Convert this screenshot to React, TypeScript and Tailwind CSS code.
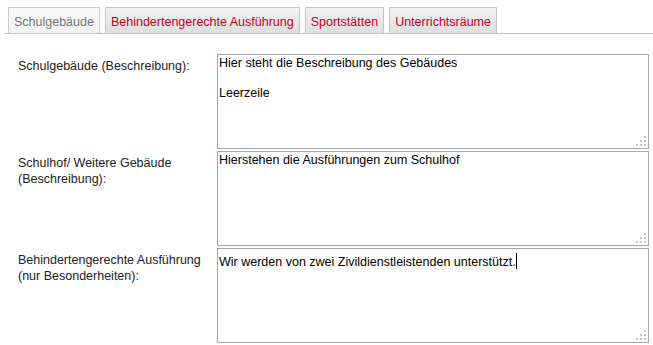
const tabs = [
  { label: "Schulgebäude", active: true },
  { label: "Behindertengerechte Ausführung" },
  { label: "Sportstätten" },
  { label: "Unterrichtsräume" },
];

function Grip() {
  return (
    <svg className="absolute bottom-[1px] right-[1px]" width="12" height="12" viewBox="0 0 12 12">
      <g fill="#c4c4c4">
        <rect x="9" y="1" width="2" height="2" />
        <rect x="5" y="5" width="2" height="2" />
        <rect x="9" y="5" width="2" height="2" />
        <rect x="1" y="9" width="2" height="2" />
        <rect x="5" y="9" width="2" height="2" />
        <rect x="9" y="9" width="2" height="2" />
      </g>
    </svg>
  );
}

function Field({ label, children }: { label: React.ReactNode; children: React.ReactNode }) {
  return (
    <div className="flex">
      <div className="w-[213px] shrink-0 pl-[14px] pt-[4px] leading-[16px] text-[#222]">{label}</div>
      <div className="relative h-[95px] w-[432px] shrink-0 border border-[#a5a9ad] bg-white px-[1px] pt-[1px] leading-[15px] text-black whitespace-pre-wrap">
        {children}
        <Grip />
      </div>
    </div>
  );
}

export default function App() {
  return (
    <div className="h-[345px] w-[653px] overflow-hidden bg-white pl-1 pt-[7px] text-[12.5px] font-['Liberation_Sans',Arial,sans-serif]">
      <div className="flex h-[27px] gap-[5px] border-b border-[#c9c9c9] pl-1">
        {tabs.map((t) => (
          <div
            key={t.label}
            className={
              t.active
                ? "h-[26px] border border-b-0 border-[#cdcdcd] bg-gradient-to-b from-[#f8f8f8] to-[#f3f3f3] px-[5px] pt-[5px] text-[#777]"
                : "h-[26px] border border-b-0 border-[#c6c6c6] bg-gradient-to-b from-[#f2f2f2] to-[#dedede] px-[5px] pt-[5px] text-[#c8001e]"
            }
          >
            {t.label}
          </div>
        ))}
      </div>
      <div className="mt-[20px] flex flex-col gap-[2px]">
        <Field label="Schulgebäude (Beschreibung):">
          {"Hier steht die Beschreibung des Gebäudes\n\nLeerzeile"}
        </Field>
        <Field
          label={
            <>
              Schulhof/ Weitere Gebäude
              <br />
              (Beschreibung):
            </>
          }
        >
          Hierstehen die Ausführungen zum Schulhof
        </Field>
        <Field
          label={
            <>
              Behindertengerechte Ausführung
              <br />
              (nur Besonderheiten):
            </>
          }
        >
          Wir werden von zwei Zivildienstleistenden unterstützt.
          <span className="inline-block h-[16px] w-px translate-y-[3px] bg-black" />
        </Field>
      </div>
    </div>
  );
}
